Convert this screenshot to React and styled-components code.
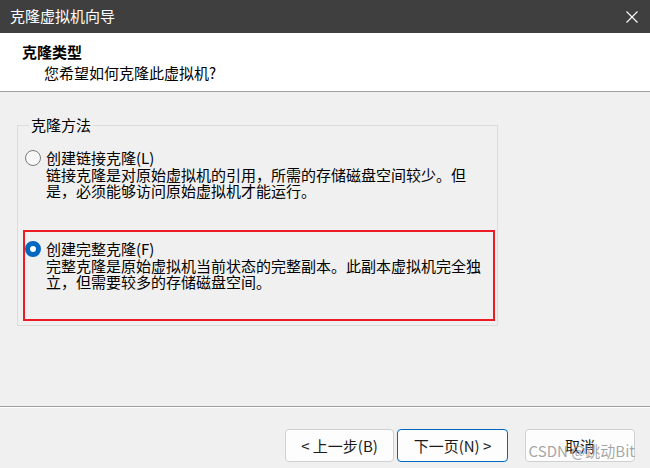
import React from 'react'
import styled, { createGlobalStyle } from 'styled-components'

const GlobalStyle = createGlobalStyle`
  html, body {
    margin: 0;
    padding: 0;
    background: #f0f0f0;
  }
  body {
    font-family: "Noto Sans CJK SC", "Noto Sans", sans-serif;
    color: #000;
  }
`

const Window = styled.div`
  position: relative;
  width: 650px;
  height: 468px;
  display: flex;
  flex-direction: column;
  background: #f0f0f0;
  overflow: hidden;
`

const TitleBar = styled.div`
  height: 33px;
  flex: none;
  display: flex;
  align-items: center;
  justify-content: space-between;
  padding: 0 12px 2px 10px;
  box-sizing: border-box;
  background: #3f3f3f;
  color: #fff;
  font-size: 15px;
  line-height: 20px;
`

const CloseBtn = styled.div`
  width: 12px;
  height: 12px;
  display: flex;
  margin-top: 2px;
`

const Header = styled.div`
  height: 59px;
  flex: none;
  box-sizing: border-box;
  background: #fff;
  border-bottom: 1px solid #a0a0a0;
  padding: 9px 0 0 22px;
`

const HeaderTitle = styled.div`
  font-size: 15px;
  line-height: 20px;
  font-weight: 700;
`

const HeaderSub = styled.div`
  font-size: 15px;
  line-height: 20px;
  margin: 1px 0 0 22px;
`

const Body = styled.div`
  flex: 1;
  min-height: 0;
`

const Group = styled.fieldset`
  margin: 23px 0 0 17px;
  width: 481px;
  height: 211px;
  box-sizing: border-box;
  border: 1px solid #dcdcdc;
  padding: 4px 2px 0 5px;
`

const Legend = styled.legend`
  font-size: 15px;
  line-height: 20px;
  padding: 0 2px;
  margin-left: 6px;
`

const Option = styled.div`
  height: 91px;
  box-sizing: border-box;
  border: 2px solid ${p => (p.$highlight ? '#ed1c24' : 'transparent')};
  padding-top: 8px;
`

const OptionRow = styled.div`
  display: flex;
  align-items: center;
  gap: 5px;
`

const Radio = styled.span`
  width: 16px;
  height: 16px;
  flex: none;
  box-sizing: border-box;
  border-radius: 50%;
  ${p =>
    p.$checked
      ? 'border: 5px solid #0067c0; background: #fff;'
      : 'border: 1px solid #7a7a7a; background: #f7f7f7;'}
`

const OptionLabel = styled.span`
  font-size: 15px;
  line-height: 17px;
`

const OptionDesc = styled.div`
  font-size: 15px;
  line-height: 16px;
  margin: 1px 0 0 21px;
  width: 440px;
`

const Footer = styled.div`
  height: 62px;
  flex: none;
  box-sizing: border-box;
  border-top: 1px solid #a0a0a0;
  box-shadow: inset 0 1px 0 #fff;
  display: flex;
  justify-content: flex-end;
  align-items: flex-start;
  padding: 22px 15px 0 0;
`

const Button = styled.button`
  width: ${p => p.$w || 110}px;
  height: 33px;
  box-sizing: border-box;
  margin-left: ${p => p.$gap || 0}px;
  border: 1px solid ${p => (p.$primary ? '#0067c0' : '#d0d0d0')};
  border-radius: 4px;
  background: #fdfdfd;
  color: #1b1b1b;
  font-family: "Noto Sans CJK SC", "Noto Sans", sans-serif;
  font-size: 15px;
  line-height: 20px;
  padding: 0;
`

const Watermark = styled.div`
  position: absolute;
  right: 15px;
  bottom: 7px;
  font-family: "Noto Sans CJK SC", "Noto Sans", sans-serif;
  font-size: 15px;
  line-height: 20px;
  color: rgba(150, 150, 150, 0.85);
  pointer-events: none;
`

function CloseIcon() {
  return (
    <svg width="12" height="12" viewBox="0 0 12 12">
      <path d="M0.5 0.5 L11.5 11.5 M11.5 0.5 L0.5 11.5" stroke="#fff" strokeWidth="1.1" fill="none" />
    </svg>
  )
}

export default function App() {
  return (
    <>
      <GlobalStyle />
      <Window>
        <TitleBar>
          <span>克隆虚拟机向导</span>
          <CloseBtn><CloseIcon /></CloseBtn>
        </TitleBar>
        <Header>
          <HeaderTitle>克隆类型</HeaderTitle>
          <HeaderSub>您希望如何克隆此虚拟机?</HeaderSub>
        </Header>
        <Body>
          <Group>
            <Legend>克隆方法</Legend>
            <Option>
              <OptionRow>
                <Radio />
                <OptionLabel>创建链接克隆(L)</OptionLabel>
              </OptionRow>
              <OptionDesc>
                链接克隆是对原始虚拟机的引用，所需的存储磁盘空间较少。但是，必须能够访问原始虚拟机才能运行。
              </OptionDesc>
            </Option>
            <Option $highlight>
              <OptionRow>
                <Radio $checked />
                <OptionLabel>创建完整克隆(F)</OptionLabel>
              </OptionRow>
              <OptionDesc>
                完整克隆是原始虚拟机当前状态的完整副本。此副本虚拟机完全独立，但需要较多的存储磁盘空间。
              </OptionDesc>
            </Option>
          </Group>
        </Body>
        <Footer>
          <Button $w={109}>&lt; 上一步(B)</Button>
          <Button $w={111} $gap={3} $primary>下一页(N) &gt;</Button>
          <Button $gap={17}>取消</Button>
        </Footer>
        <Watermark>CSDN @跳动Bit</Watermark>
      </Window>
    </>
  )
}
